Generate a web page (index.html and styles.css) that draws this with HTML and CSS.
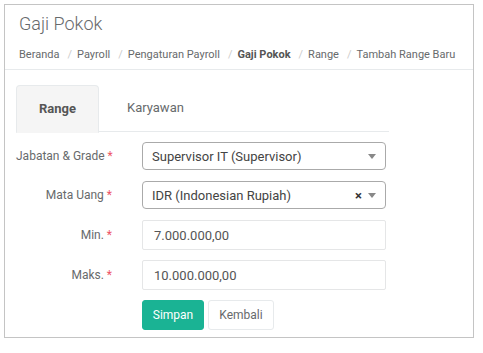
FILE: index.html
```html
<!DOCTYPE html>
<html>
<head>
<meta charset="utf-8">
<link rel="stylesheet" href="styles.css">
</head>
<body>
<div class="card">
  <div class="header">
    <h1 class="title">Gaji Pokok</h1>
    <ol class="crumbs">
      <li>Beranda</li>
      <li class="sep">/</li>
      <li>Payroll</li>
      <li class="sep">/</li>
      <li>Pengaturan Payroll</li>
      <li class="sep">/</li>
      <li class="strong">Gaji Pokok</li>
      <li class="sep">/</li>
      <li>Range</li>
      <li class="sep">/</li>
      <li>Tambah Range Baru</li>
    </ol>
  </div>
  <div class="body">
    <div class="tabs">
      <div class="tab active">Range</div>
      <div class="tab">Karyawan</div>
    </div>
    <div class="form">
      <div class="row">
        <label class="lbl left">Jabatan &amp; Grade <span class="req">*</span></label>
        <div class="select">
          <span class="val">Supervisor IT (Supervisor)</span>
          <span class="caret"></span>
        </div>
      </div>
      <div class="row">
        <label class="lbl">Mata Uang <span class="req">*</span></label>
        <div class="select">
          <span class="val">IDR (Indonesian Rupiah)</span>
          <span class="clear">×</span>
          <span class="caret"></span>
        </div>
      </div>
      <div class="row">
        <label class="lbl">Min. <span class="req">*</span></label>
        <div class="input">7.000.000,00</div>
      </div>
      <div class="row">
        <label class="lbl">Maks. <span class="req">*</span></label>
        <div class="input">10.000.000,00</div>
      </div>
      <div class="row actions">
        <span class="lbl"></span>
        <div class="btns">
          <button class="btn primary">Simpan</button>
          <button class="btn">Kembali</button>
        </div>
      </div>
    </div>
  </div>
</div>
</body>
</html>
```
FILE: styles.css
```css
* { box-sizing: border-box; }
html, body { margin: 0; padding: 0; background: #fff; }
body {
  font-family: Roboto, "Liberation Sans", Arial, sans-serif;
  color: #676a6c;
  width: 483px;
  height: 353px;
  overflow: hidden;
}
.card {
  margin: 4px 0 0 4px;
  width: 470px;
  height: 334px;
  border: 1px solid #c4c4c4;
}
.header {
  height: 65px;
  border-bottom: 1px solid #e7eaec;
  padding: 8px 0 0 14px;
}
.title {
  margin: 0;
  font-size: 18px;
  font-weight: 300;
  color: #676a6c;
  line-height: 22px;
}
.crumbs {
  list-style: none;
  margin: 13px 0 0 0;
  padding: 0;
  display: flex;
  font-size: 11px;
  line-height: 13px;
  color: #676a6c;
}
.crumbs .sep { color: #ccc; padding: 0 5px 0 8px; }
.crumbs .strong { font-weight: 700; color: #555; }
.body { padding: 15px 0 0 11px; }
.tabs {
  display: flex;
  width: 373px;
  height: 47px;
  border-bottom: 1px solid #e7eaec;
}
.tab {
  font-size: 13px;
  line-height: 46px;
  padding: 0 25px;
  color: #676a6c;
}
.tab.active {
  width: 83px;
  text-align: center;
  padding: 0;
  font-weight: 700;
  color: #555;
  background: #f5f5f5;
  border: 1px solid #e7eaec;
  border-bottom: 1px solid #f5f5f5;
  border-radius: 4px 4px 0 0;
  margin-bottom: -1px;
  height: 48px;
  margin-right: 3px;
}
.form { padding-top: 10px; }
.row {
  display: flex;
  align-items: center;
  margin-bottom: 11px;
}
.row:nth-child(3), .row:nth-child(4) { margin-bottom: 10px; }
.lbl {
  width: 96px;
  flex: none;
  text-align: right;
  font-size: 12px;
  color: #676a6c;
  margin-right: 30px;
  white-space: nowrap;
}
.lbl.left { text-align: left; }
.req { color: #ed5565; }
.select {
  width: 244px;
  height: 28px;
  border: 1px solid #aaa;
  border-radius: 4px;
  display: flex;
  align-items: center;
  padding: 0 8px 0 9px;
  font-size: 13px;
  color: #444;
}
.select .val { flex: 1; }
.clear { font-size: 13px; font-weight: 700; color: #333; margin-right: 6px; }
.caret {
  width: 0; height: 0;
  border-left: 4px solid transparent;
  border-right: 4px solid transparent;
  border-top: 5px solid #888;
  margin-right: 1px;
}
.input {
  width: 244px;
  height: 30px;
  border: 1px solid #e5e6e7;
  border-radius: 2px;
  padding: 0 11px;
  display: flex;
  align-items: center;
  font-size: 13px;
  color: #555;
}
.btns { display: flex; gap: 4px; }
.btn {
  font-family: inherit;
  font-size: 12px;
  height: 30px;
  border-radius: 3px;
  border: 1px solid #e7eaec;
  background: #fff;
  color: #676a6c;
  padding: 0 11px;
}
.btn.primary {
  background: #1ab394;
  border-color: #1ab394;
  color: #fff;
  width: 62px;
  padding: 0;
}
.btn:not(.primary) { width: 66px; padding: 0; }
```
